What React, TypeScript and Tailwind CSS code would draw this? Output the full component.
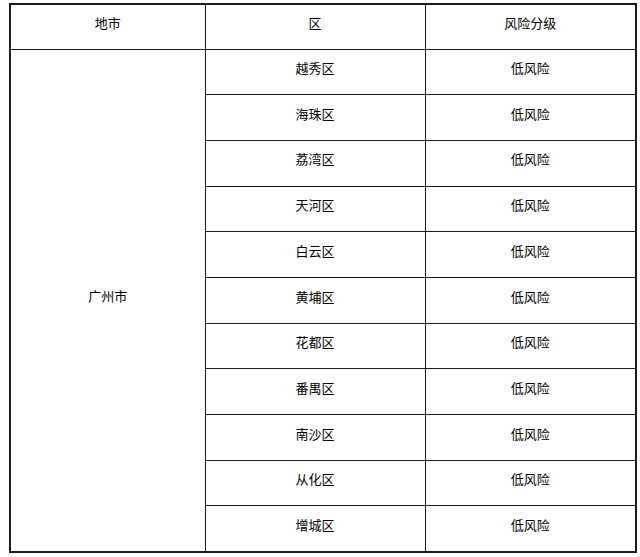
import React from "react";

const districts = [
    "越秀区",
    "海珠区",
    "荔湾区",
    "天河区",
    "白云区",
    "黄埔区",
    "花都区",
    "番禺区",
    "南沙区",
    "从化区",
    "增城区",
];

export default function App() {
    const cell = "border-[1.5px] border-[#1a1a1a] text-center align-middle pb-[6px]";

    return (
        <div
            className="w-[640px] h-[557px] bg-white pt-[3px] pl-[9px] text-[13px] text-black"
            style={{ fontFamily: '"Liberation Serif", "Noto Sans CJK SC", serif' }}
        >
            <table className="w-[626px] table-fixed border-collapse border-2 border-[#1a1a1a]">
                <colgroup>
                    <col className="w-[195px]" />
                    <col className="w-[220px]" />
                    <col className="w-[211px]" />
                </colgroup>
                <thead>
                    <tr className="h-[45px]">
                        <th className={`${cell} font-normal`}>地市</th>
                        <th className={`${cell} font-normal`}>区</th>
                        <th className={`${cell} font-normal`}>风险分级</th>
                    </tr>
                </thead>
                <tbody>
                    {districts.map((name, i) => (
                        <tr key={name} className="h-[45.7px]">
                            {i === 0 && (
                                <td rowSpan={districts.length} className={cell}>
                                    广州市
                                </td>
                            )}
                            <td className={cell}>{name}</td>
                            <td className={cell}>低风险</td>
                        </tr>
                    ))}
                </tbody>
            </table>
        </div>
    );
}
